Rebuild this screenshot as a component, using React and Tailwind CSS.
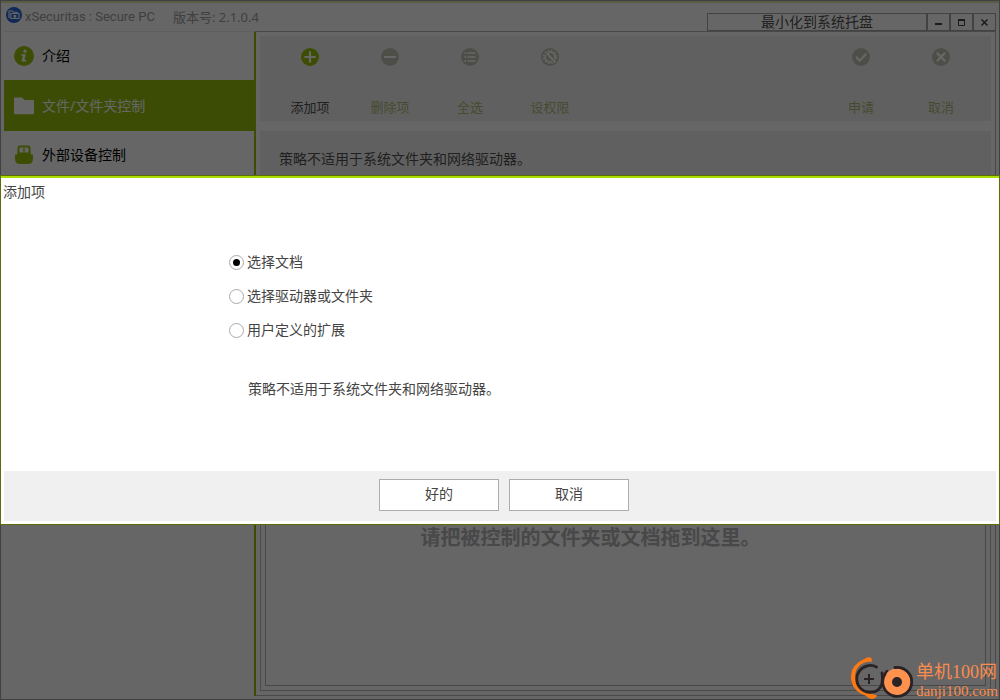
import React, { useState } from "react";

function Disc({ children, active }) {
  return (
    <svg viewBox="0 0 18 18" className={`h-[18px] w-[18px] ${active ? "text-[#9ac40a]" : "text-[#c0c2b2]"}`} aria-hidden="true">
      <circle cx="9" cy="9" r="9" fill="currentColor" />
      {children}
    </svg>
  );
}

const stroke = { stroke: "#fff", strokeWidth: 2.2, strokeLinecap: "round", strokeLinejoin: "round", fill: "none" };

const glyphs = {
  add: <path d="M9 4.200v9.600M4.200 9h9.600" {...stroke} />,
  remove: <path d="M4 9h10" {...stroke} />,
  list: (
    <g fill="#fff">
      <circle cx="4.300" cy="5" r="1" />
      <circle cx="4.300" cy="9" r="1" />
      <circle cx="4.300" cy="13" r="1" />
      <path d="M6.500 4.200h8v1.600h-8zM6.500 8.200h8v1.600h-8zM6.500 12.200h8v1.600h-8z" />
    </g>
  ),
  gear: (
    <g fill="none" stroke="#fff">
      <circle cx="9" cy="9" r="4.800" strokeWidth="1.700" />
      <circle cx="9" cy="9" r="6.400" strokeWidth="1.600" strokeDasharray="1.750 1.600" />
      <path d="M4.800 4.200l9 10.200" stroke="currentColor" strokeWidth="3.600" />
      <path d="M5.800 5l8 9" strokeWidth="1.900" strokeLinecap="round" />
    </g>
  ),
  check: <path d="M4.600 9.400l3.200 3.200 5.800-6.200" {...stroke} />,
  cross: <path d="M5.400 5.400l7.200 7.200M12.600 5.400l-7.200 7.200" {...stroke} />,
};

function ToolButton({ icon, label, active }) {
  return (
    <button
      type="button"
      disabled={!active}
      className={`flex w-20 flex-col items-center justify-between text-[13px] leading-5 ${active ? "text-[#505050]" : "text-[#b0bb78]"}`}
    >
      <Disc active={active}>{glyphs[icon]}</Disc>
      <span>{label}</span>
    </button>
  );
}

function InfoIcon() {
  return (
    <svg viewBox="0 0 20 20" className="h-5 w-5" aria-hidden="true">
      <circle cx="10" cy="10" r="10" fill="#9ac40a" />
      <circle cx="11" cy="5.200" r="1.600" fill="#fff" />
      <path d="M7.400 8.200h4.300l-1.300 5.600h1.800v1.600H7.400l1.500-5.600H7.200z" fill="#fff" />
    </svg>
  );
}

function FolderIcon() {
  return (
    <svg viewBox="0 0 20 20" className="h-5 w-5" aria-hidden="true">
      <path d="M0 2.500Q0 1.500 1 1.500h7L10.500 4H19q1 0 1 1v12.500q0 .8-1 .8H1q-1 0-1-.8z" fill="#fff" />
    </svg>
  );
}

function UsbIcon() {
  return (
    <svg viewBox="0 0 20 20" className="h-5 w-5" aria-hidden="true">
      <path d="M4.500 9V3q0-1.500 1.500-1.500h8q1.500 0 1.500 1.500v6z" fill="#fff" stroke="#9ac40a" strokeWidth="2" />
      <path d="M3.500 7.500h13V10h-13zM9.300 3h1.400v5H9.300z" fill="#9ac40a" />
      <path d="M1 9.500h18v4q0 5.500-5 5.500H6q-5 0-5-5.500z" fill="#9ac40a" />
    </svg>
  );
}

function AppLogo() {
  return (
    <svg viewBox="0 0 16 16" className="h-4 w-4" aria-hidden="true">
      <circle cx="8" cy="8" r="8" fill="#2868d8" />
      <path d="M3 11V4h3.500l1 1.200H11v1.300" fill="none" stroke="#fff" strokeWidth="1.100" />
      <path d="M4.800 6.500h8.200v5H4.800z" fill="none" stroke="#fff" strokeWidth="1.100" />
      <path d="M7.500 8h2.800v2.600H7.500z" fill="#fff" />
    </svg>
  );
}

const navItems = [
  { label: "介绍", Icon: InfoIcon },
  { label: "文件/文件夹控制", Icon: FolderIcon, selected: true },
  { label: "外部设备控制", Icon: UsbIcon },
];

function WindowButton({ label, children }) {
  return (
    <button type="button" aria-label={label} className="flex w-[23px] items-center justify-center border border-[#a6a6a6]">
      <svg viewBox="0 0 9 9" className="h-[9px] w-[9px]" fill="none" stroke="#444" strokeWidth="2" aria-hidden="true">
        {children}
      </svg>
    </button>
  );
}

function TitleBar() {
  return (
    <header className="flex h-7 shrink-0 items-end justify-between">
      <div className="flex items-start self-start pl-[5px] pt-1 text-[13px] text-[#a0a0a0]">
        <AppLogo />
        <h1 className="pl-[3px] pt-[2px] font-['Roboto',sans-serif] leading-4">xSecuritas : Secure PC</h1>
        <span className="pl-[18px] pt-[2px] leading-4">版本号: 2.1.0.4</span>
      </div>
      <div className="mr-[3px] flex h-[18px]">
        <button type="button" className="w-[220px] border border-[#a6a6a6] text-sm leading-4 text-[#505050]">
          最小化到系统托盘
        </button>
        <WindowButton label="最小化">
          <path d="M1 6h7" />
        </WindowButton>
        <WindowButton label="最大化">
          <path d="M1 2h7" />
          <path d="M1.500 2v5.500h6V2" strokeWidth="1" />
        </WindowButton>
        <WindowButton label="关闭">
          <path d="M1.500 1.500l6 6M7.500 1.500l-6 6" strokeWidth="1.500" />
        </WindowButton>
      </div>
    </header>
  );
}

function Sidebar() {
  return (
    <nav className="ml-[3px] w-[252px] shrink-0 border-r-2 border-t border-r-[#9ac40a] border-t-[#eee]">
      <ul>
        {navItems.map(({ label, Icon, selected }) => (
          <li key={label}>
            <a
              href="#"
              className={`flex items-center gap-2 pl-[10px] text-sm ${selected ? "h-[51px] bg-[#98bf0a] text-white" : "h-12 text-black"}`}
            >
              <Icon />
              {label}
            </a>
          </li>
        ))}
      </ul>
    </nav>
  );
}

function Workspace() {
  return (
    <main className="mr-[3px] flex min-w-0 flex-1 flex-col border-b border-r border-t border-[#b4b4b4] p-1">
      <div className="flex h-[85px] shrink-0 justify-between bg-[#f1f1f1] px-[10px] pb-1 pt-3">
        <div className="flex">
          <ToolButton icon="add" label="添加项" active />
          <ToolButton icon="remove" label="删除项" />
          <ToolButton icon="list" label="全选" />
          <ToolButton icon="gear" label="设权限" />
        </div>
        <div className="flex">
          <ToolButton icon="check" label="申请" />
          <ToolButton icon="cross" label="取消" />
        </div>
      </div>
      <p className="mt-[10px] h-14 shrink-0 bg-[#f1f1f1] pl-[19px] text-sm leading-[56px] text-[#505050]">
        策略不适用于系统文件夹和网络驱动器。
      </p>
      <div className="mt-[198px] flex flex-1 border border-[#bdbdb0] p-1">
        <div className="flex flex-1 items-center justify-center border border-[#b4b4b4] pr-[70px] text-xl font-bold text-[#b4b4b4]">
          请把被控制的文件夹或文档拖到这里。
        </div>
      </div>
    </main>
  );
}

const choices = ["选择文档", "选择驱动器或文件夹", "用户定义的扩展"];

function AddDialog() {
  const [choice, setChoice] = useState(0);
  return (
    <div className="absolute inset-0 flex flex-col justify-center bg-black/60">
      <section
        role="dialog"
        aria-labelledby="dialog-title"
        className="flex h-[350px] flex-col border border-[#5a6e0a] bg-white px-[3px] pb-[3px] text-sm text-[#444]"
      >
        <div className="-mx-[3px] h-0.5 bg-[#aade00]" />
        <h2 id="dialog-title" className="-ml-[1px] pt-1 leading-5">
          添加项
        </h2>
        <fieldset className="flex flex-col gap-[14px] pl-[225px] pt-[50px]">
          {choices.map((label, i) => (
            <label key={label} className="flex items-center gap-[3px] leading-5">
              <input
                type="radio"
                name="target"
                checked={choice === i}
                onChange={() => setChoice(i)}
                className="h-[15px] w-[15px] appearance-none rounded-full border border-[#aaa] bg-white checked:bg-black checked:bg-clip-content checked:p-[3px]"
              />
              {label}
            </label>
          ))}
        </fieldset>
        <p className="pl-[244px] pt-[39px] leading-5">策略不适用于系统文件夹和网络驱动器。</p>
        <div className="mt-auto flex h-[50px] items-center justify-center gap-[10px] bg-[#f0f0f0] pb-[2px] pl-2">
          <button type="button" className="h-8 w-[120px] border border-[#adadad] bg-white pb-[2px] leading-5">
            好的
          </button>
          <button type="button" className="h-8 w-[120px] border border-[#adadad] bg-white pb-[2px] leading-5">
            取消
          </button>
        </div>
      </section>
    </div>
  );
}

function Watermark() {
  return (
    <div className="absolute bottom-0 right-[2px] flex items-end gap-[3px] text-[#f98c4e]">
      <svg viewBox="0 0 62 44" className="h-11 w-[62px]" fill="none" aria-hidden="true">
        <path
          d="M20 3Q18 .5 13 4Q-1 10 1 24Q3 35 15 39Q21 45 25 40Q12 37 6 29Q0 17 8 9Q13 4.500 20 5z"
          fill="#ff7a12"
          stroke="#ff7a12"
          strokeWidth="1.500"
        />
        <path d="M25.500 11A13.500 13.500 0 1 0 27 34Q33 29 31 17" stroke="#2b2225" strokeWidth="2.800" strokeLinecap="round" />
        <path d="M18 18v10M13 23h10" stroke="#2b2225" strokeWidth="2" />
        <path d="M34 18l2-3" stroke="#2b2225" strokeWidth="2.500" strokeLinecap="round" />
        <circle cx="46" cy="26" r="13.500" fill="#ff914f" />
        <path d="M44 11.500A14.500 14.500 0 1 1 34 18" stroke="#2b2225" strokeWidth="2.800" strokeLinecap="round" />
        <circle cx="46" cy="26" r="5" fill="#2b2225" />
      </svg>
      <div className="whitespace-nowrap font-['Liberation_Serif','Noto_Sans_CJK_SC',serif]">
        <div className="text-lg leading-5">单机100网</div>
        <div className="text-[15px] leading-[18px]">danji100.com</div>
      </div>
    </div>
  );
}

export default function App() {
  return (
    <div className="relative h-screen min-h-[600px] font-['Noto_Sans','Noto_Sans_CJK_SC',sans-serif]">
      <div className="flex h-full flex-col overflow-hidden border border-[#a0a0a0] bg-white">
        <div className="h-0.5 shrink-0 bg-[#dfe8a8]" />
        <TitleBar />
        <div className="flex min-h-0 flex-1 pb-[3px]">
          <Sidebar />
          <Workspace />
        </div>
      </div>
      <AddDialog />
      <Watermark />
    </div>
  );
}
